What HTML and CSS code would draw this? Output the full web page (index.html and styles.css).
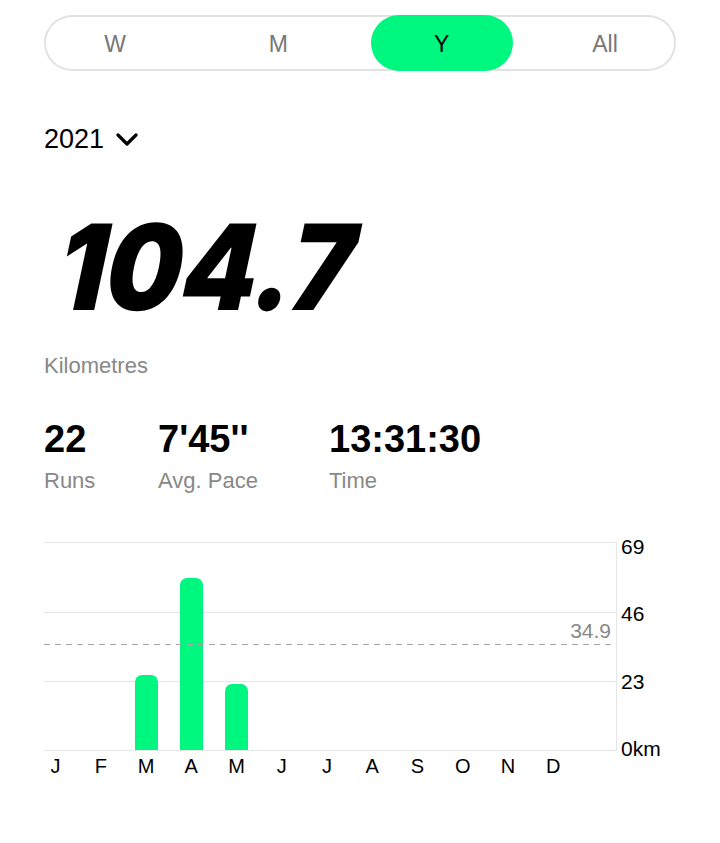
FILE: index.html
```html
<html>

<head>
    <link rel="stylesheet" href="styles.css">
</head>

<body>
    <div class="segment">
        <div class="segment-item">W</div>
        <div class="segment-item">M</div>
        <div class="segment-item active">Y</div>
        <div class="segment-item">All</div>
    </div>

    <div class="year">
        <span>2021</span>
        <svg class="chevron" width="22" height="14" viewBox="0 0 22 14">
            <path d="M2 2 L11 11 L20 2" fill="none" stroke="#000" stroke-width="3.2" stroke-linecap="round" stroke-linejoin="round" />
        </svg>
    </div>

    <div class="total">104.7</div>
    <div class="total-label">Kilometres</div>

    <div class="stats">
        <div class="stat stat-runs">
            <div class="stat-value">22</div>
            <div class="stat-label">Runs</div>
        </div>
        <div class="stat stat-pace">
            <div class="stat-value">7'45''</div>
            <div class="stat-label">Avg. Pace</div>
        </div>
        <div class="stat">
            <div class="stat-value">13:31:30</div>
            <div class="stat-label">Time</div>
        </div>
    </div>

    <div class="chart">
        <div class="plot-row">
            <div class="plot">
                <div class="gridline g46"></div>
                <div class="gridline g23"></div>
                <div class="columns">
                    <div class="col"></div>
                    <div class="col"></div>
                    <div class="col"><div class="bar" style="height: 75px"></div></div>
                    <div class="col"><div class="bar" style="height: 172px"></div></div>
                    <div class="col"><div class="bar" style="height: 66px"></div></div>
                    <div class="col"></div>
                    <div class="col"></div>
                    <div class="col"></div>
                    <div class="col"></div>
                    <div class="col"></div>
                    <div class="col"></div>
                    <div class="col"></div>
                </div>
                <div class="average" style="bottom: 105px"><span>34.9</span></div>
            </div>
            <div class="axis">
                <div>69</div>
                <div>46</div>
                <div>23</div>
                <div>0km</div>
            </div>
        </div>
        <div class="months">
            <div>J</div>
            <div>F</div>
            <div>M</div>
            <div>A</div>
            <div>M</div>
            <div>J</div>
            <div>J</div>
            <div>A</div>
            <div>S</div>
            <div>O</div>
            <div>N</div>
            <div>D</div>
        </div>
    </div>
</body>

</html>
```

FILE: styles.css
```css
body {
    font-family: 'Liberation Sans', Arial, sans-serif;
    background-color: #fff;
    color: #000;
    margin: 0;
    padding: 0;
    width: 720px;
}

.segment {
    display: flex;
    justify-content: space-between;
    margin: 15px 44px 0 44px;
    height: 56px;
    border-radius: 28px;
    box-shadow: inset 0 0 0 2px #e2e2e2;
}

.segment-item {
    width: 142px;
    height: 56px;
    border-radius: 28px;
    display: flex;
    align-items: center;
    justify-content: center;
    font-size: 23px;
    color: #777;
    padding-top: 2px;
    box-sizing: border-box;
}

.segment-item.active {
    background-color: #00f77f;
    color: #000;
}

.year {
    display: flex;
    align-items: center;
    gap: 12px;
    margin: 50px 0 0 44px;
    font-size: 27px;
    height: 36px;
}

.chevron {
    margin-top: 2px;
}

.total {
    margin: 40px 0 0 60px;
    font-family: 'Inter', 'Liberation Sans', sans-serif;
    font-size: 119px;
    font-weight: 900;
    line-height: 140px;
    letter-spacing: 0;
    transform: skewX(-12deg) scaleX(0.9);
    transform-origin: left center;
}

.total-label {
    margin: 16px 0 0 44px;
    font-size: 22px;
    color: #888;
}

.stats {
    display: flex;
    margin: 38px 0 0 44px;
}

.stat-runs {
    width: 114px;
}

.stat-pace {
    width: 171px;
}

.stat-value {
    font-size: 38px;
    font-weight: bold;
    line-height: 44px;
}

.stat-label {
    font-size: 22px;
    color: #888;
    margin-top: 7px;
}

.chart {
    margin: 48px 0 0 44px;
}

.plot-row {
    display: flex;
}

.plot {
    position: relative;
    width: 572px;
    height: 207px;
    border-top: 1px solid #e6e6e6;
    border-right: 1px solid #e6e6e6;
    border-bottom: 1px solid #e6e6e6;
}

.gridline {
    position: absolute;
    left: 0;
    right: 0;
    height: 1px;
    background-color: #e6e6e6;
}

.g46 {
    top: 69px;
}

.g23 {
    top: 138px;
}

.columns {
    position: relative;
    display: grid;
    grid-template-columns: repeat(12, 45.25px);
    height: 100%;
}

.col {
    display: flex;
    align-items: flex-end;
    height: 100%;
}

.bar {
    width: 23px;
    background-color: #00f77f;
    border-radius: 7px 7px 0 0;
}

.average {
    position: absolute;
    left: 0;
    right: 0;
    height: 1px;
    background: repeating-linear-gradient(to right, #a8a8a8 0, #a8a8a8 6px, transparent 6px, transparent 11px);
}

.average span {
    position: absolute;
    right: 5px;
    bottom: 2px;
    font-size: 21px;
    color: #888;
}

.axis {
    display: flex;
    flex-direction: column;
    justify-content: space-between;
    margin: -5px 0 -8px 4px;
    font-size: 21px;
    line-height: 20px;
}

.months {
    display: grid;
    grid-template-columns: repeat(12, 45.25px);
    margin-top: 4px;
    font-size: 20px;
}

.months div {
    width: 23px;
    text-align: center;
}
```
